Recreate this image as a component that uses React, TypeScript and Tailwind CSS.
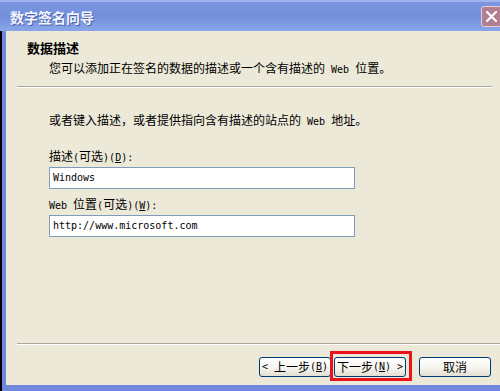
import React from "react";

// split text so that ASCII runs get the half-width mono face, like SimSun does
const Txt = ({ text }: { text: string }) => {
  const parts = text.split(/([\x00-\x7F]+)/).filter((p) => p.length > 0);
  return (
    <>
      {parts.map((p, i) =>
        /^[\x00-\x7F]+$/.test(p) ? (
          <span
            key={i}
            className="font-['DejaVu_Sans_Mono',monospace] text-[10px] leading-none whitespace-pre"
          >
            {p}
          </span>
        ) : (
          <span key={i}>{p}</span>
        )
      )}
    </>
  );
};

const Key = ({ k }: { k: string }) => (
  <span className="font-['DejaVu_Sans_Mono',monospace] text-[10px] leading-none whitespace-pre">
    (<span className="underline">{k}</span>)
  </span>
);

const Line = ({ className = "", children }: { className?: string; children: React.ReactNode }) => (
  <div className={`h-[14px] leading-[14px] whitespace-nowrap ${className}`}>{children}</div>
);

const Separator = ({ className = "" }: { className?: string }) => (
  <div className={`flex flex-col ${className}`}>
    <div className="h-px bg-[#aca899]" />
    <div className="h-px bg-white" />
  </div>
);

const WizardButton = ({ children }: { children: React.ReactNode }) => (
  <button className="w-[72px] h-[20px] flex items-center justify-center rounded-[3px] border border-[#003c74] bg-gradient-to-b from-white via-[#f7f6f1] to-[#e3e0d2] text-[12px] leading-[12px] text-black">
    {children}
  </button>
);

const CloseIcon = () => (
  <div className="w-[21px] h-[21px] mr-[-2px] rounded-[3px] border border-[#e6d0d8] bg-[#b27e92] flex items-center justify-center">
    <svg width="11" height="11" viewBox="0 0 11 11">
      <path d="M1 1 L10 10 M10 1 L1 10" stroke="#fff" strokeWidth="2.2" strokeLinecap="square" />
    </svg>
  </div>
);

export default function App() {
  return (
    <div className="w-[500px] h-[391px] overflow-hidden flex flex-col bg-[#ece9d8] font-['Noto_Sans_CJK_SC','Liberation_Sans',sans-serif] text-black">
      {/* Title bar */}
      <div className="h-[31px] shrink-0 flex items-center pl-[10px] border-t-2 border-[#9fb5ee] bg-gradient-to-b from-[#7b96df] via-[#7290dc] to-[#8aa6ea]">
        <span className="text-[14px] leading-[16px] font-bold text-[#f4f6ff] [text-shadow:1px_1px_0_#4d63a8]">
          数字签名向导
        </span>
        <div className="ml-auto">
          <CloseIcon />
        </div>
      </div>

      {/* Frame + body */}
      <div className="flex-1 flex flex-col">
        <div className="flex-1 flex border-l-2 border-black">
          <div className="flex-1 flex flex-col border-l-4 border-[#6f88db] text-[12px]">
            {/* Header */}
            <Line className="mt-[10px] pl-[21px] font-bold text-[13px]">数据描述</Line>
            <Line className="mt-[6px] pl-[43px]">
              <Txt text="您可以添加正在签名的数据的描述或一个含有描述的 Web 位置。" />
            </Line>
            <Separator className="mt-[11px] ml-[11px] mr-[8px]" />

            {/* Form */}
            <div className="pl-[43px] flex flex-col">
              <Line className="mt-[25px]">
                <Txt text="或者键入描述，或者提供指向含有描述的站点的 Web 地址。" />
              </Line>
              <Line className="mt-[22px]">
                描述<Txt text="(" />可选<Txt text=")" />
                <Key k="D" />
                <Txt text=":" />
              </Line>
              <div className="mt-[4px] w-[306px] h-[22px] border border-[#7f9db9] bg-white flex items-center pl-[3px]">
                <Txt text="Windows" />
              </div>
              <Line className="mt-[8px]">
                <Txt text="Web " />
                位置<Txt text="(" />可选<Txt text=")" />
                <Key k="W" />
                <Txt text=":" />
              </Line>
              <div className="mt-[4px] w-[306px] h-[22px] border border-[#7f9db9] bg-white flex items-center pl-[3px]">
                <Txt text="http://www.microsoft.com" />
              </div>
            </div>

            {/* Footer */}
            <Separator className="mt-auto ml-[11px]" />
            <div className="mt-[12px] mb-[8px] pr-[9px] flex justify-end items-center">
              <WizardButton>
                <Txt text="< " />
                上一步
                <Key k="B" />
              </WizardButton>
              <div className="relative ml-[3px]">
                <WizardButton>
                  下一步
                  <Key k="N" />
                  <Txt text=" >" />
                </WizardButton>
                <div className="absolute -left-[4px] -right-[6px] -top-[6px] -bottom-[4px] border-[3px] border-[#e8141b] pointer-events-none" />
              </div>
              <div className="ml-[13px]">
                <WizardButton>取消</WizardButton>
              </div>
            </div>
          </div>
        </div>
        <div className="h-[6px] shrink-0 border-l-2 border-black bg-[#6f88db]" />
      </div>
    </div>
  );
}
